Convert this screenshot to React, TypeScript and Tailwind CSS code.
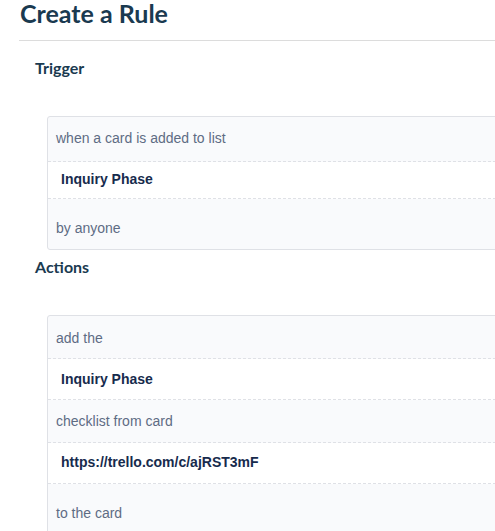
import React from "react";

type Row = {
  text: string;
  bold?: boolean;
  pad: string;
  last?: boolean;
};

const triggerRows: Row[] = [
  { text: "when a card is added to list", pad: "pt-[13px] pb-[15px]" },
  { text: "Inquiry Phase", bold: true, pad: "pt-[9px] pb-[11px]" },
  { text: "by anyone", pad: "pt-[21px] pb-[13px]", last: true },
];

const actionRows: Row[] = [
  { text: "add the", pad: "pt-[14px] pb-[12px]" },
  { text: "Inquiry Phase", bold: true, pad: "pt-[12px] pb-[12px]" },
  { text: "checklist from card", pad: "pt-[13px] pb-[13px]" },
  { text: "https://trello.com/c/ajRST3mF", bold: true, pad: "pt-[11px] pb-[13px]" },
  { text: "to the card", pad: "pt-[21px] pb-[13px]", last: true },
];

function RuleCard({ rows }: { rows: Row[] }) {
  return (
    <div className="ml-[47px] w-[480px] rounded-[3px] border border-[#dfe1e6] bg-[#f9fafc] overflow-hidden font-['Liberation_Sans',Arial,sans-serif] text-[14px] leading-4">
      {rows.map((row, i) => (
        <div
          key={i}
          className={`${row.pad} ${row.last ? "" : "border-b border-dashed border-[#dfe1e6]"} ${
            row.bold ? "bg-white pl-[13px] font-bold text-[#172b4d]" : "pl-2 text-[#5e6c84]"
          }`}
        >
          {row.text}
        </div>
      ))}
    </div>
  );
}

export default function App() {
  return (
    <div className="w-[495px] h-[531px] overflow-hidden bg-white font-['Lato','Open_Sans',sans-serif]">
      {/* Header */}
      <div className="ml-[19px] border-b border-[#dcdcdc] pl-[1px] pb-[14px]">
        <h1 className="text-[25px] leading-[26px] font-bold text-[#1a3a50]">Create a Rule</h1>
      </div>

      {/* Trigger */}
      <h2 className="mt-[18px] pl-[35px] text-[16px] leading-[18px] font-bold text-[#1a3a50]">Trigger</h2>
      <div className="mt-[39px]">
        <RuleCard rows={triggerRows} />
      </div>

      {/* Actions */}
      <h2 className="mt-[8px] pl-[35px] text-[16px] leading-[18px] font-bold text-[#1a3a50]">Actions</h2>
      <div className="mt-[39px]">
        <RuleCard rows={actionRows} />
      </div>
    </div>
  );
}
